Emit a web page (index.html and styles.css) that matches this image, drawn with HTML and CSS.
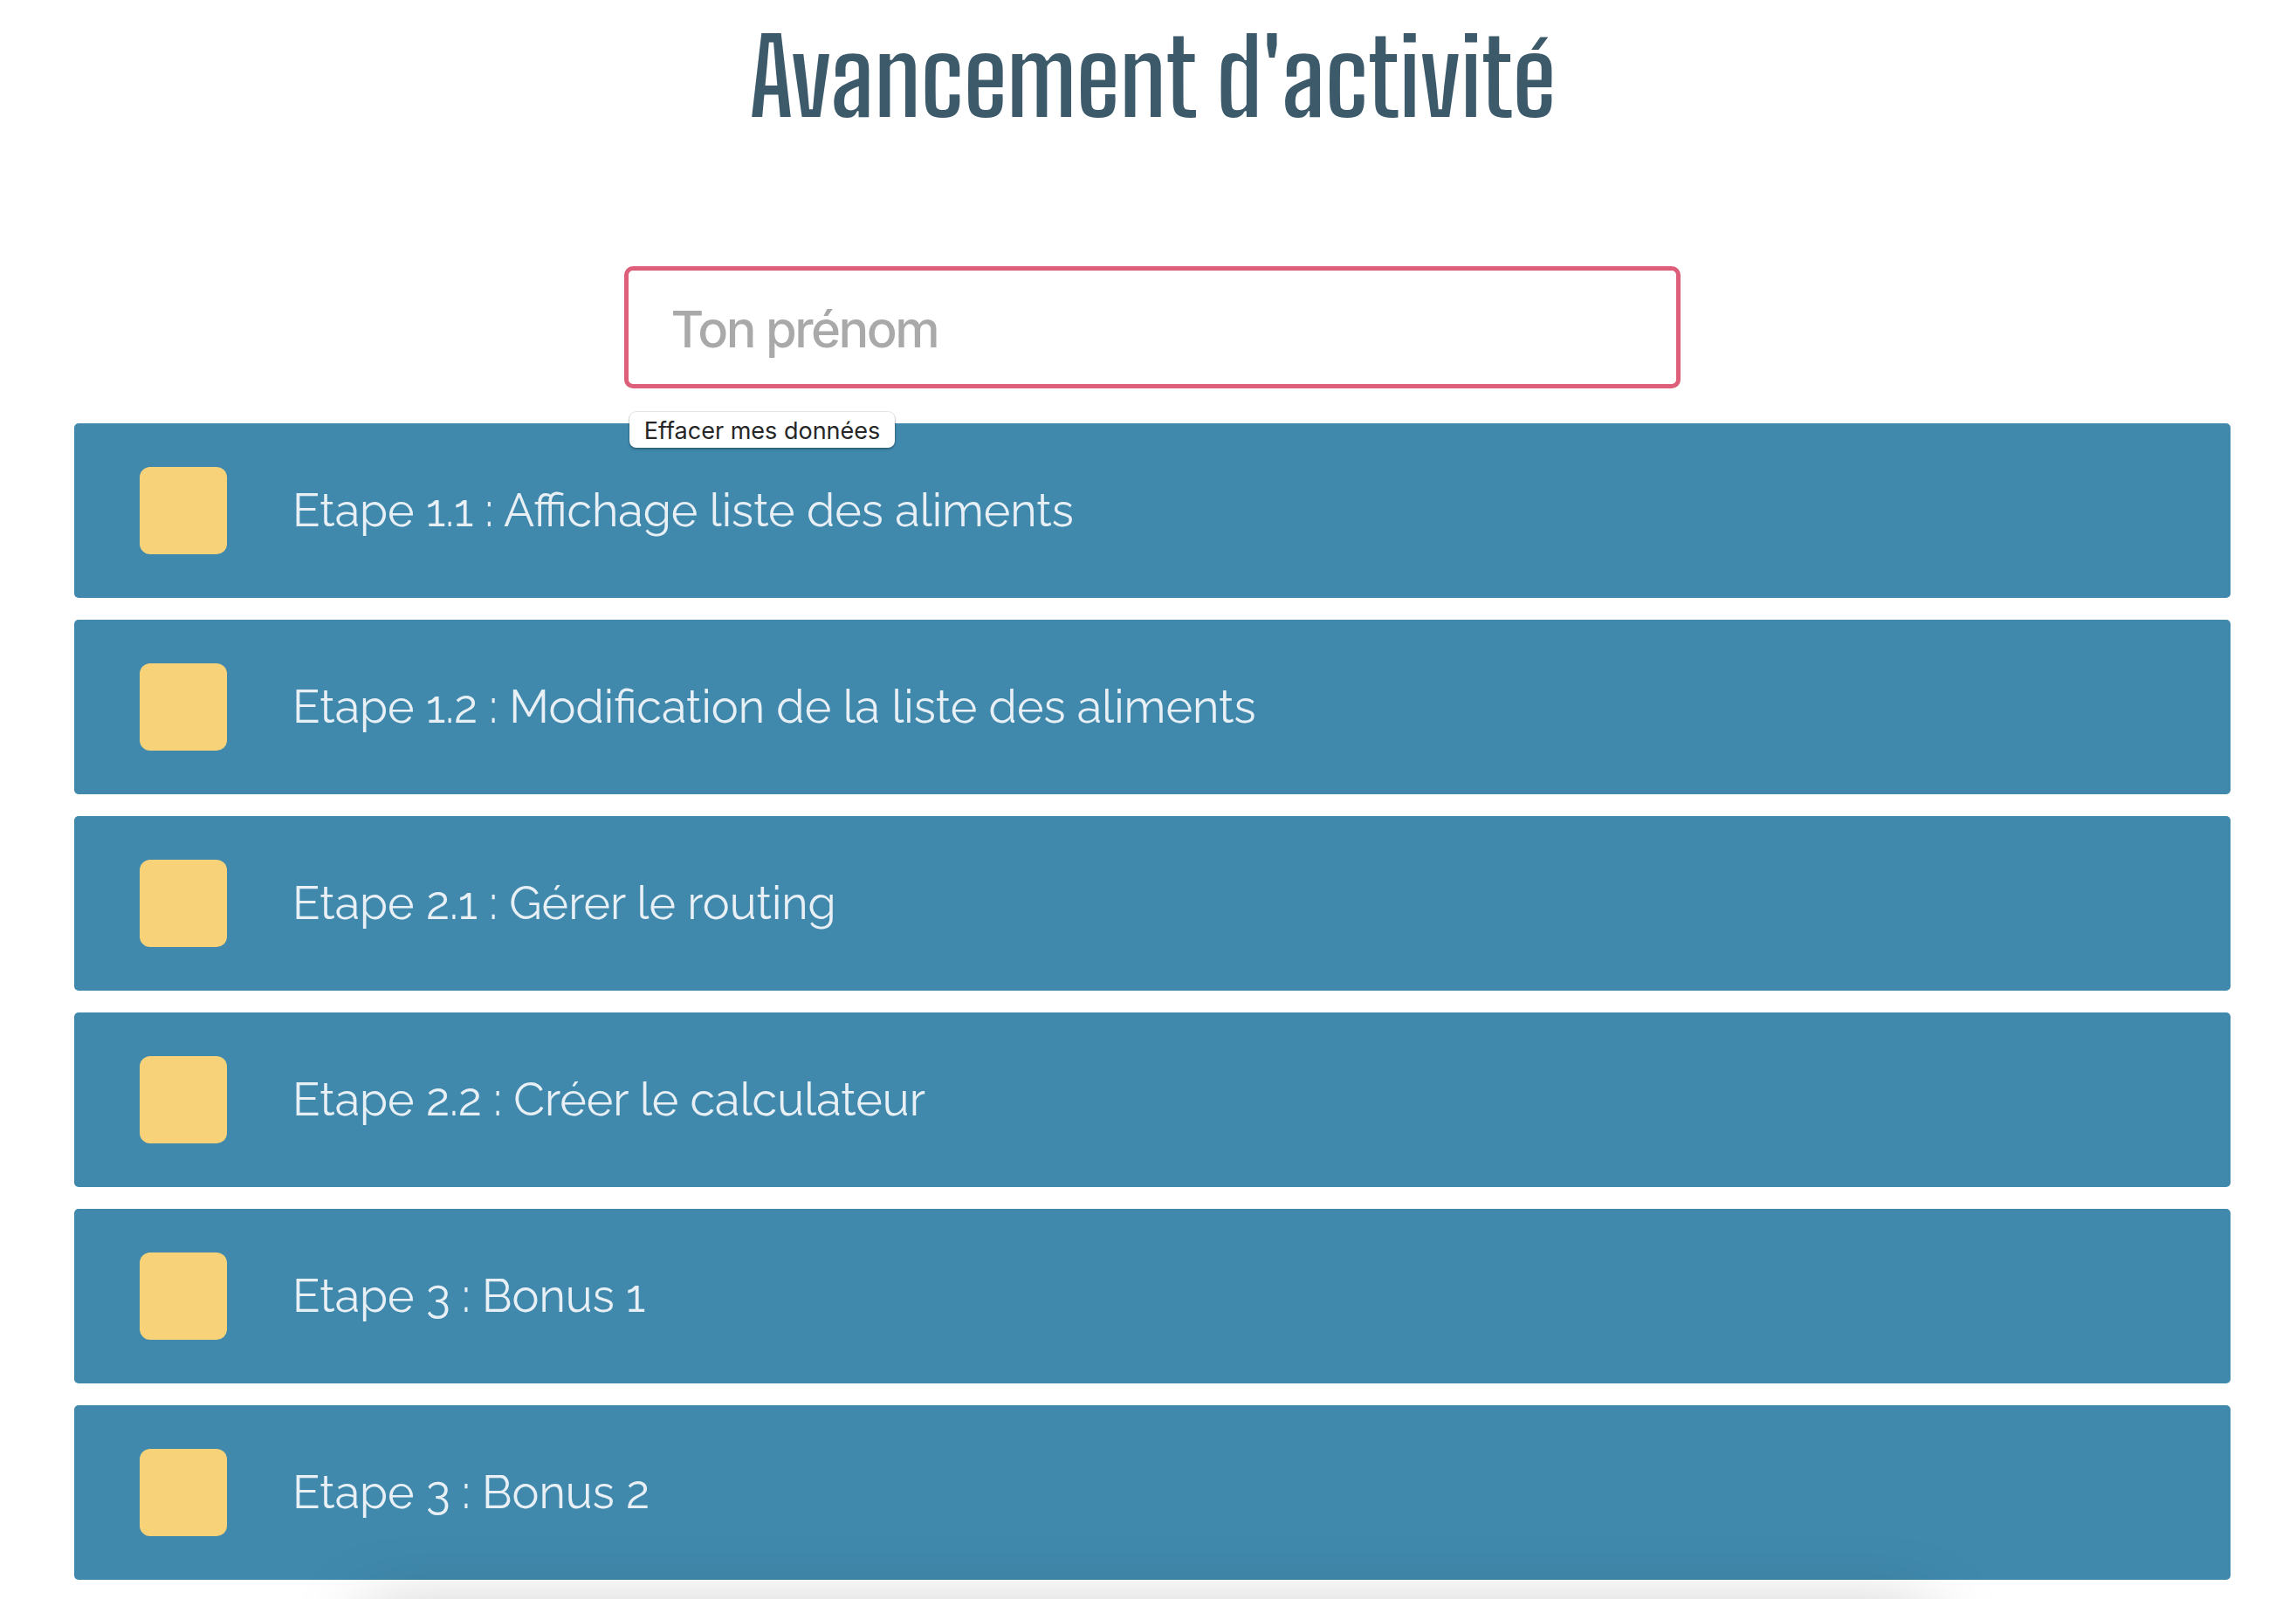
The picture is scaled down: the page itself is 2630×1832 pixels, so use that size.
FILE: index.html
```html
<!DOCTYPE html>
<html lang="fr">
<head>
<meta charset="utf-8">
<title>Avancement d'activité</title>
<meta name="viewport" content="width=device-width, initial-scale=1">
<link rel="stylesheet" href="styles.css">
</head>
<body>
<main class="page">
  <h1 class="title">Avancement d'activité</h1>
  <form class="identity">
    <input class="name-input" type="text" placeholder="Ton prénom" aria-label="Ton prénom">
    <button class="clear-button" type="button">Effacer mes données</button>
  </form>
  <ul class="steps">
    <li><label class="step"><input class="step-check" type="checkbox"><span>Etape 1.1 : Affichage liste des aliments</span></label></li>
    <li><label class="step"><input class="step-check" type="checkbox"><span>Etape 1.2 : Modification de la liste des aliments</span></label></li>
    <li><label class="step"><input class="step-check" type="checkbox"><span>Etape 2.1 : Gérer le routing</span></label></li>
    <li><label class="step"><input class="step-check" type="checkbox"><span>Etape 2.2 : Créer le calculateur</span></label></li>
    <li><label class="step"><input class="step-check" type="checkbox"><span>Etape 3 : Bonus 1</span></label></li>
    <li><label class="step"><input class="step-check" type="checkbox"><span>Etape 3 : Bonus 2</span></label></li>
  </ul>
</main>
<div class="dock-shadow"></div>
</body>
</html>
```
FILE: styles.css
```css
* {
  box-sizing: border-box;
}

body {
  margin: 0;
  background: #fff;
  font-family: Raleway, Lato, sans-serif;
}

.page {
  padding: 0 75px 0 85px;
}

.title {
  margin: 0;
  padding-top: 8px;
  color: #3d5a6b;
  font-family: "Big Shoulders Text", "Big Shoulders Display", "Liberation Sans Narrow", sans-serif;
  font-size: 120px;
  font-weight: 600;
  line-height: 160px;
  text-align: center;
}

.identity {
  width: 49%;
  margin: 137px auto 0;
  display: flex;
  flex-direction: column;
  align-items: flex-start;
}

.name-input {
  width: 100%;
  height: 140px;
  padding: 4px 50px 0;
  border: 5px solid #dd5f7a;
  border-radius: 10px;
  background: #fff;
  color: #333;
  font-family: "Inter Tight", Roboto, sans-serif;
  font-size: 58px;
  font-weight: 500;
  outline: none;
}

.name-input::placeholder {
  color: #a9a9a9;
  opacity: 1;
}

/* The button hangs over the top edge of the first step. */
.clear-button {
  position: relative;
  z-index: 1;
  margin: 27px 6px -28px;
  height: 41px;
  padding: 2px 17px 0;
  border: 0;
  border-radius: 8px;
  background: #fff;
  box-shadow: 0 0 0 1px rgba(0, 0, 0, 0.1), 0 2px 3px rgba(0, 0, 0, 0.25);
  color: #262626;
  font-family: Inter, sans-serif;
  font-size: 27px;
  line-height: 39px;
}

.steps {
  display: flex;
  flex-direction: column;
  gap: 25px;
  margin: 0;
  padding: 0;
  list-style: none;
}

.step {
  display: flex;
  align-items: center;
  gap: 75px;
  padding: 50px 75px;
  border-radius: 5px;
  background: #4089ad;
  color: #e8f0f5;
  font-size: 52px;
  font-weight: 400;
  line-height: 100px;
}

.step-check {
  appearance: none;
  flex: none;
  width: 100px;
  height: 100px;
  margin: 0;
  border-radius: 12px;
  background: #f7d278;
}

.step-check:checked {
  background: #dd5f7a;
}

.dock-shadow {
  position: fixed;
  top: calc(100% + 18px);
  right: 16%;
  left: 16%;
  height: 400px;
  box-shadow: 0 0 80px rgba(0, 0, 0, 0.25);
  pointer-events: none;
}
```
